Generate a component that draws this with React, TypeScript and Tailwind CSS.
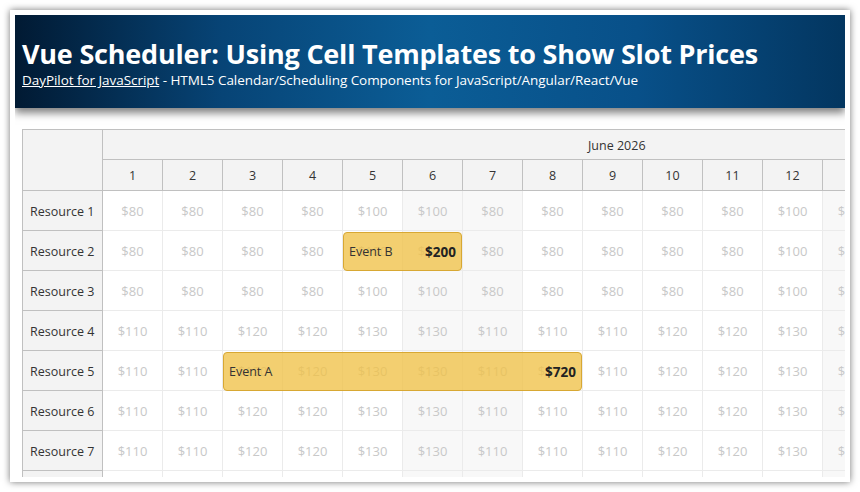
import React from 'react';

const days = [1, 2, 3, 4, 5, 6, 7, 8, 9, 10, 11, 12, 13];
const weekend = [6, 7, 13];

const priceLow = [80, 80, 80, 80, 100, 100, 80, 80, 80, 80, 80, 100, 100];
const priceHigh = [110, 110, 120, 120, 130, 130, 110, 110, 110, 120, 120, 130, 130];

type Ev = { text: string; price: string; start: number; span: number };

const resources: { name: string; prices: number[]; event?: Ev }[] = [
  { name: 'Resource 1', prices: priceLow },
  { name: 'Resource 2', prices: priceLow, event: { text: 'Event B', price: '$200', start: 4, span: 2 } },
  { name: 'Resource 3', prices: priceLow },
  { name: 'Resource 4', prices: priceHigh },
  { name: 'Resource 5', prices: priceHigh, event: { text: 'Event A', price: '$720', start: 2, span: 6 } },
  { name: 'Resource 6', prices: priceHigh },
  { name: 'Resource 7', prices: priceHigh },
  { name: 'Resource 8', prices: priceHigh },
];

const font = { fontFamily: '"Open Sans", "Noto Sans", sans-serif' };

const App: React.FC = () => {
  return (
    <div className="w-[860px] h-[492px] bg-white pt-[10px] pl-[10px] overflow-hidden" style={font}>
      <div className="w-[840px] h-[472px] bg-white p-[5px] shadow-[0_0_7px_rgba(0,0,0,0.55)]">
        <div className="w-[830px] h-[462px] overflow-hidden">
          {/* header */}
          <div className="relative z-10 h-[93px] pl-[7px] pt-[22px] text-white bg-[linear-gradient(90deg,#011a33_0%,#074476_25%,#0b5d96_50%,#085089_75%,#033660_100%)] shadow-[0_5px_8px_rgba(0,0,0,0.5)]">
            <h1 className="text-[27px] font-bold leading-[34px] tracking-[-0.21px]">
              Vue Scheduler: Using Cell Templates to Show Slot Prices
            </h1>
            <div className="text-[13.5px] leading-[18px] tracking-[-0.05px]">
              <a className="underline">DayPilot for JavaScript</a>
              <span> - HTML5 Calendar/Scheduling Components for JavaScript/Angular/React/Vue</span>
            </div>
          </div>

          {/* scheduler */}
          <div className="ml-[7px] mt-[21px] w-[900px] border-l border-t border-[#c0c0c0] text-[12.5px]">
            <div className="flex">
              <div className="w-[80px] h-[61px] shrink-0 bg-[#f3f3f3] border-r border-b border-[#c0c0c0]" />
              <div className="flex flex-col">
                <div className="h-[30px] w-[780px] bg-[#f3f3f3] border-b border-[#c0c0c0] flex items-center pt-[3px] pl-[485px] text-[#333]">
                  June 2026
                </div>
                <div className="flex">
                  {days.map((d) => (
                    <div
                      key={d}
                      className="w-[60px] h-[31px] shrink-0 bg-[#f3f3f3] border-r border-b border-[#c0c0c0] flex items-center justify-center pt-[2px] text-[#333]"
                    >
                      {d}
                    </div>
                  ))}
                </div>
              </div>
            </div>

            {resources.map((r) => (
              <div key={r.name} className="flex h-[40px]">
                <div className="w-[80px] shrink-0 bg-[#f3f3f3] border-r border-b border-[#c0c0c0] flex items-center pt-[3px] pl-[7px] text-[#333]">
                  {r.name}
                </div>
                <div className="relative flex">
                  {r.prices.map((p, i) => (
                    <div
                      key={i}
                      className={
                        'w-[60px] shrink-0 border-r border-b border-[#ebebeb] flex items-center justify-center pt-[3px] text-[13px] text-[#c8c8c8] ' +
                        (weekend.includes(i + 1) ? 'bg-[#f8f8f8]' : 'bg-white')
                      }
                    >
                      ${p}
                    </div>
                  ))}
                  {r.event && (
                    <div
                      className="absolute top-[1px] h-[39px] rounded-[4px] border border-[#d8a833] bg-[rgba(240,194,72,0.78)] flex items-center justify-between pt-[2px] px-[5px] text-[#333]"
                      style={{ left: r.event.start * 60, width: r.event.span * 60 - 1 }}
                    >
                      <span>{r.event.text}</span>
                      <span className="font-bold text-[13.5px] text-[#222]">{r.event.price}</span>
                    </div>
                  )}
                </div>
              </div>
            ))}
          </div>
        </div>
      </div>
    </div>
  );
};

export default App;
